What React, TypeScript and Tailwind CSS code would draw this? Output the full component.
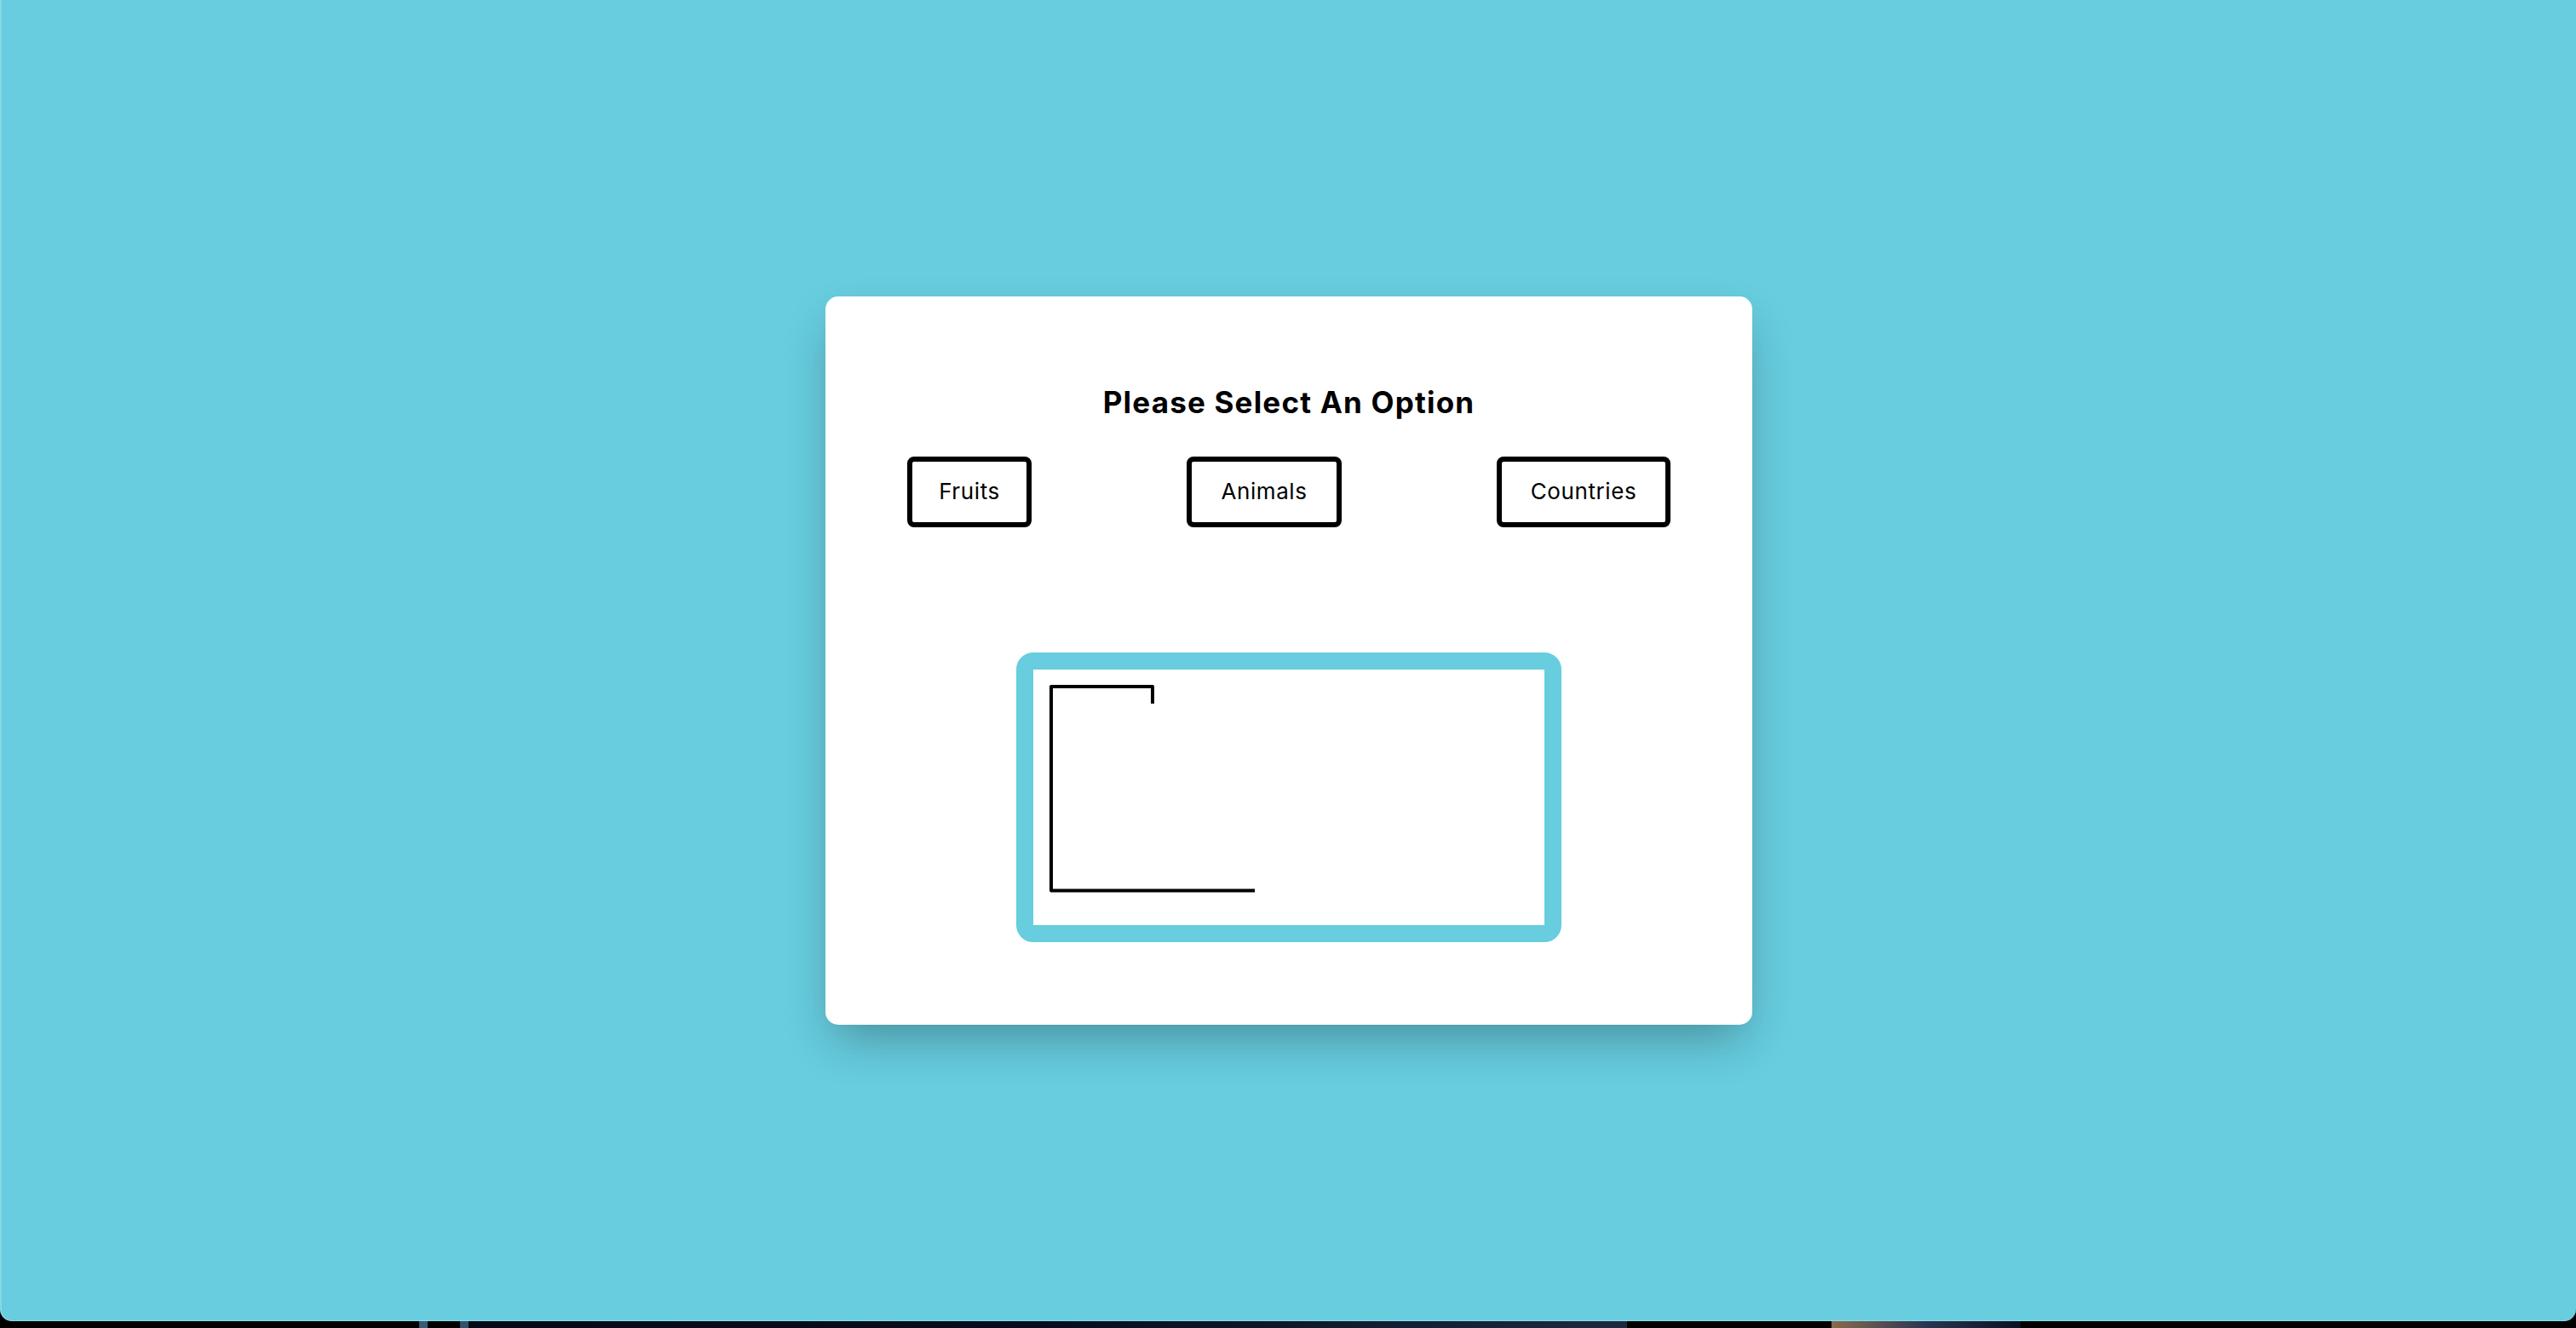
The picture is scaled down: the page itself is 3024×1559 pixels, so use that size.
import React from "react";

function Hangman() {
  return (
    <svg width="600" height="300" viewBox="0 0 600 300" className="block">
      <path
        d="M140 40 V20 H21 V259.5 H260"
        fill="none"
        stroke="#000"
        strokeWidth="4"
        strokeLinejoin="round"
      />
    </svg>
  );
}

export default function App() {
  const options = [
    { label: "Fruits", w: "w-[146px]" },
    { label: "Animals", w: "w-[182px]" },
    { label: "Countries", w: "w-[204px]" },
  ];
  return (
    <div className="h-[1559px] w-full bg-black flex flex-col overflow-hidden">
      <div className="h-[1551px] w-full shrink-0 bg-[#67cddf] rounded-b-[14px] border-l-2 border-b border-l-[#86d8e6] border-b-[#8edbe8] flex items-center justify-center">
        <div
          className="w-[1088px] h-[855px] bg-white rounded-[15px] shadow-[0_25px_55px_-10px_rgba(0,0,0,0.3)] flex flex-col items-center pt-[102px]"
          style={{ fontFamily: "Inter, 'Noto Sans', sans-serif" }}
        >
          <h1 className="text-[35px] leading-[44px] font-bold text-black tracking-[1.2px]">
            Please Select An Option
          </h1>
          <div className="mt-[42px] w-full px-[96px] flex justify-between">
            {options.map((o) => (
              <button
                key={o.label}
                className={`${o.w} h-[83px] border-[6px] border-black rounded-[8px] bg-white text-black text-[26px] leading-[38px] tracking-[0.6px] flex items-center justify-center`}
              >
                {o.label}
              </button>
            ))}
          </div>
          <div className="mt-[147px] border-[20px] border-[#67cddf] rounded-[20px] bg-white">
            <Hangman />
          </div>
        </div>
      </div>
      <div className="h-[8px] w-full flex">
        <div className="w-[492px] bg-black" />
        <div className="w-[10px] bg-[#3a5a78]" />
        <div className="w-[38px] bg-black" />
        <div className="w-[10px] bg-[#34506c]" />
        <div className="w-[1360px] bg-gradient-to-r from-[#050a18] via-[#070d1e] to-[#1c2a40]" />
        <div className="w-[240px] bg-black" />
        <div className="w-[222px] bg-gradient-to-r from-[#8a6a4a] via-[#2a3550] to-[#0a1224]" />
        <div className="flex-1 bg-black" />
      </div>
    </div>
  );
}
